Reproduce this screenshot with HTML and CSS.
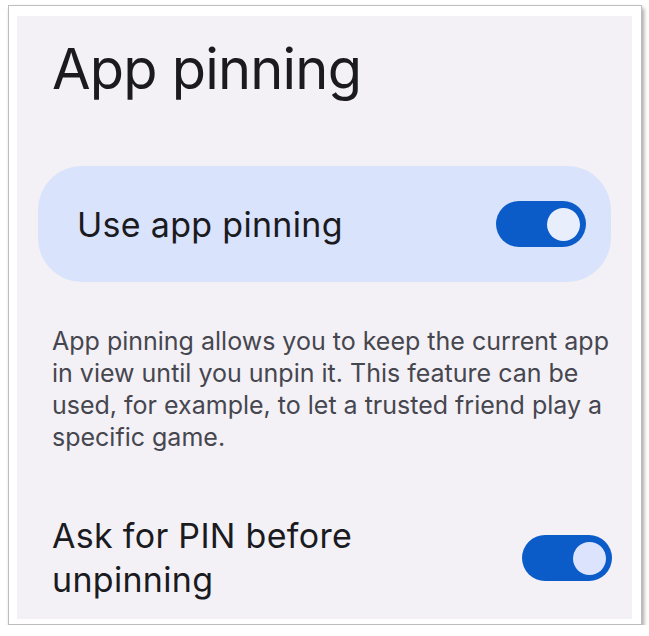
FILE: index.html
```html
<!DOCTYPE html>
<html lang="en">
<head>
<meta charset="UTF-8">
<meta name="viewport" content="width=device-width, initial-scale=1.0">
<title>App pinning</title>
<link rel="stylesheet" href="styles.css">
</head>
<body>

<div class="frame">
    <div class="panel">
        <h1 class="title">App pinning</h1>

        <!-- Main switch card -->
        <div class="main-card">
            <span class="main-label">Use app pinning</span>
            <span class="switch on"><span class="thumb"></span></span>
        </div>

        <p class="summary">App pinning allows you to keep the current app in view until you unpin it. This feature can be used, for example, to let a trusted friend play a specific game.</p>

        <div class="pref-row">
            <span class="pref-label">Ask for PIN before unpinning</span>
            <span class="switch on"><span class="thumb pale"></span></span>
        </div>
    </div>
</div>

</body>
</html>
```

FILE: styles.css
```css
body {
    margin: 0;
    background-color: #ffffff;
    font-family: Inter, Roboto, sans-serif;
    padding: 5px 0 0 8px;
}
.frame {
    width: 634px;
    height: 620px;
    border: 1px solid #bdbdbd;
    background-color: #ffffff;
    box-shadow: 2px 3px 4px rgba(0, 0, 0, 0.35);
    padding: 10px 9px 5px 8px;
    box-sizing: border-box;
}
.panel {
    background-color: #f3f1f6;
    height: 100%;
    overflow: hidden;
}
.title {
    margin: 0;
    padding: 16px 0 0 35px;
    font-size: 56px;
    font-weight: 400;
    line-height: 74px;
    color: #1b1b1f;
    letter-spacing: -0.8px;
}
.main-card {
    display: flex;
    align-items: center;
    justify-content: space-between;
    background-color: #d9e3fc;
    margin: 60px 21px 0 21px;
    height: 116px;
    border-radius: 44px;
    padding: 0 25px 0 39px;
}
.main-label {
    font-size: 34px;
    color: #1b1b1f;
    letter-spacing: 0.3px;
}
.switch {
    display: flex;
    align-items: center;
    justify-content: flex-end;
    width: 90px;
    height: 46px;
    border-radius: 23px;
    background-color: #0b5cc8;
    padding: 0 6px;
    box-sizing: border-box;
}
.thumb {
    width: 33px;
    height: 33px;
    border-radius: 50%;
    background-color: #e8eefc;
}
.thumb.pale {
    background-color: #dbe4fc;
}
.summary {
    margin: 43px 20px 0 35px;
    font-size: 25px;
    line-height: 32px;
    color: #46464f;
}
.pref-row {
    display: flex;
    align-items: center;
    justify-content: space-between;
    margin-top: 61px;
    padding: 0 20px 0 35px;
}
.pref-label {
    font-size: 34px;
    line-height: 44px;
    color: #1b1b1f;
    letter-spacing: 0.3px;
    width: 340px;
}
```
